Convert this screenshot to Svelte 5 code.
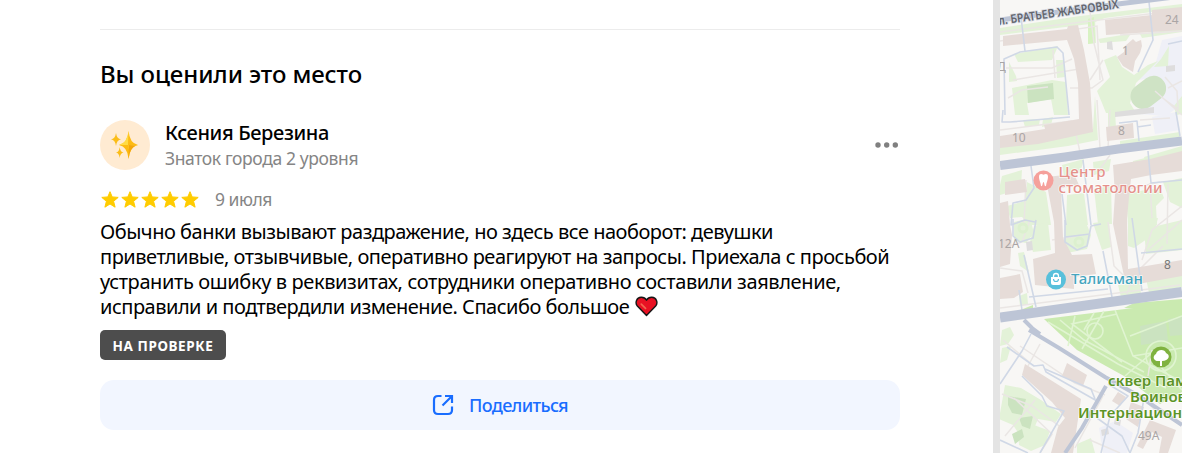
<script lang="ts">
  interface Line {
    text: string
    spacing: number
  }

  const lines: Line[] = [
    { text: 'Обычно банки вызывают раздражение, но здесь все наоборот: девушки', spacing: -0.49 },
    { text: 'приветливые, отзывчивые, оперативно реагируют на запросы. Приехала с просьбой', spacing: -0.47 },
    { text: 'устранить ошибку в реквизитах, сотрудники оперативно составили заявление,', spacing: -0.38 },
    { text: 'исправили и подтвердили изменение. Спасибо большое', spacing: -0.5 },
  ]

  const rating = 5

  const lawns = [
    'M1000 28 1080 16 1098 14 1182 4V8L1105 18 1090 24 1000 35Z',
    'M1014 54 1058 46 1052 60 1018 62Z',
    'M1009 62l7 14 1 5-8 1zM1056 60l8 0 1 17-8 1z',
    'M1012 88l40-8 14 2 2 33h-14l-3-16-24 4 2 12h-14z',
    'M1088 19l7-2 1 26-8 1z',
    'M1104 60l12-5 6 12 12 8 14-10 10-4-22 22-6 20 6 10h-30l-4-10-5-12 13-14z',
    'M1098 39l24-4 8 0-4 6-26 2zM1140 34l42-6v4l-40 6z',
    'M1161 59l8-13-1 20-14 1zM1174 106l8-10v18l-6 1z',
    'M1095 96l3 44-30 6-68 9v-8l45-8 48-10z',
    'M1023 120l17-1-1 6-14 2zM1043 119l10-2-2 8-9 2z',
    'M1108 110l7-1 1 20-8 3zM1120 141l60-9v5l-60 8z',
    'M1002 176l20-6-1 17-14 6-7 2v-10z',
    'M1027 182l19 10 5 33h-22l-7-8-12 1-3-12 18-5z',
    'M1062 165l22-6-4 14-16 3zM1093 162l18-3-2 12-15 4zM1133 161l12-3 2 14-14 2z',
    'M1067 195l17-2 4 32h-22zM1094 189l17-3 1 38h-14zM1126 193l34-5 4 10-8 8 1 19h-29z',
    'M1163 182l19-4v30l-12-6zM1144 157l38-11v6l-36 10z',
    'M1014 222l16-4 4 15-8 10-12-2zM1034 226l14-4 3 28-18 2-3-10z',
    'M1065 224l20-4 6 15-4 14-20 4-3-12zM1093 223l16-2 2 26-9 3z',
    'M1128 222l30-4-4 16-20 14-6-2zM1144 229l38-9v30l-36 4z',
    'M1018 253l6-1 5 20-9-6zM1019 296l8-3 1 11-8 2z',
    'M1118 285l22-2 1 11-20 3zM1146 278l36-8v17l-33 6z',
    'M1002 330l8-3 4 8-6 9-8 2zM1002 348l9-2-4 14-7 3z',
    'M1005 385l16 3 20 12 20 14-5 8-18-3-5 12-12 6-8-12-14-6z',
    'M1018 433l16-8 16 6-5 14-14 6-12-6zM1077 444l14-6 4 15h-18z',
  ]

  const parks = [
    'M1044 319 1182 302V392L1160 404 1124 376 1077 350Z',
    'M1000 318l25-7 8-3v-3zM1124 308l10-5 48-4v12z',
  ]

  const darkLawns = [
    'M1027 86l26-3 1 16-26 4z',
    'M1140 326l26-5 2 20-27 4zM1168 319l14-2v18l-12 1z',
    'M1008 396l18 3-4 16-10-2-4-8zM1019 418l14-2-3 13-8-3zM1012 434l10-5 2 8-9 7z',
  ]

  const houses = [
    'M1003 36 1067 29 1068 26 1078 25 1084 50 1090 83 1093 132 1038 144 1000 148V136L1045 129 1044 125 1079 119 1078 83 1074 59 1067 40 1003 46Z',
    'M1105 20l47-5v-5l30-3v23l-30 2-46 3z',
    'M1117 57l7-5 1-6 8-7 3 3 5-2 1 6-2 7-5 8-2 11-10-6z',
    'M1106 127l27-4 1 15-27 3z',
    'M1005 182l20-3 2 13-22 3z',
    'M1046 177l28-3 5 11-18 3 2 50 9 17 20-1 4 20-22 3 0 12-39-4-2-26 22-6-1-31-7-37z',
    'M1113 165l37-6 32-8v20l-31 4-20 4-2 18-2 22 1 50 54-9v16l-44 8-14-8-11-52 2-30z',
    'M1000 203l8-2 2 24 2 10-2 29-10 3z',
    'M1000 278l20-4 3 18-9 6-14 1z',
    'M1025 364 1081 399 1073 453H1051L1058 427 1065 418 1052 402 1022 375Z',
    'M1067 363 1087 375 1083 386 1062 376Z',
    'M1118 392l8 5-6 9-8-5zM1131 402l13 5-6 20-12-8zM1150 420l26 10-8 23h-9l3-16-10-5-9 17-6-3z',
  ]

  const paths = [
    'M1000 32 1182 10M1000 41 1097 26 1100 80M1090 12 1094 43 1103 80 1092 88 1070 88M1120 35l62-4',
    'M1006 68l46 0 20-9M1013 80l66-11M1053 50l2 28M1008 98l14-8 26-3M1097 100l3 48M1103 60l-13 20',
    'M1000 163 1182 143M1110 110l-2 38M1140 120l30-2M1075 130l5 22M1110 155l-10 14M1000 130l72-9',
    'M1026 180l-2 45M1150 183l2 35M1168 184l-1 60M1124 190l36-8M1182 206l-30 24-10 30',
    'M1000 249l22-7 8-22M1000 268l22 3 6 22M1052 240l30-5M1108 222l6 44 20 20M1148 250l34-30',
    'M1000 308l180-23M1118 282l60-9M1127 294l6-18 30-30',
    'M1003 340l26 22M1002 394l30 12 30 22M1040 344l-12 22M1014 398l38 36-12 19M1035 400l-30 36',
    'M1103 396l-28 52M1143 398l20 20M1090 440l30 13M1020 346l55 37 30 12',
    'M1165 77l12 14 1 18-14-10M1168 88l14-7M1155 91l27 24M1152 350l-4 26',
  ]

  const lanes = [
    'M1021 17l4 34M1005 115l-1-56 16-7 37-5 6 6 6 62M1149 2l4 38-15 32M1182 41l-14 3',
    'M1003 110l-1 12 8 0 60-5M1119 123l18-2 2 20M1176 112l4 24M1137 127l14-2',
    'M1031 166l3 22-8 12-13 3-2 22 14-5 10 2',
    'M1083 160l8 65M1148 151l3 32 31-3M1062 194l4 31',
    'M1013 219l0 17 7 6 13-4 3-18M1065 220v22l12 8 10-4 4-20 10-2M1065 237l25-3',
    'M1103 251l9 46M1024 255l12 52M1132 218l10 73M1141 253l41-4M1029 297l79-8M1019 290l3 20',
    'M1000 384 1022 351 1031 334M1007 347l27 19 9-1 3 7 51 29M1045 369l46 20 4 10',
    'M1022 376l20 20 5 10 17 5-24 42M1000 440l28 13M1108 384l20 12-18 20-9 37M1097 418l25 18 8 17M1144 398l-6 35-8 20',
  ]
</script>

<div class="page">
  <main class="panel">
    <section class="review">
      <h2>Вы оценили это место</h2>

      <header class="author">
        <div class="avatar">
          <svg width="28" height="28" viewBox="0 0 28 28">
            <path fill="#fdbb13" d="M17.6 0Q18.6 12.2 27 14 18.6 15.6 17.6 28 16.5 15.6 8 14 16.5 12.2 17.6 0z" />
            <path fill="#ffdb45" d="M17.6 0Q17 12.2 17 14L8 14Q16 12.2 17.6 0zM17.6 14 27 14Q19 15.2 17.6 18z" />
            <path fill="#f4a60b" d="M17.8 14 25 14.6Q18.6 17 17.6 28z" />
            <path fill="#fbbd18" d="M5 2Q5.8 7.8 10 8.3 5.8 9.1 5 15 4.2 9.1 0 8.3 4.2 7.8 5 2zM8.7 16Q9.2 21 12.5 21.6 9.2 22.2 8.7 27 8.2 22.2 5 21.6 8.2 21 8.7 16z" />
          </svg>
        </div>
        <div class="who">
          <div class="name">Ксения Березина</div>
          <div class="level">Знаток города 2 уровня</div>
        </div>
        <button class="more" aria-label="Ещё">
          <svg width="24" height="6" viewBox="0 0 24 6" fill="#808080">
            <circle cx="4" cy="3" r="2.7" />
            <circle cx="12.700" cy="3" r="2.7" />
            <circle cx="21.300" cy="3" r="2.7" />
          </svg>
        </button>
      </header>

      <div class="rating">
        <div class="stars">
          {#each Array(rating) as _}
            <svg width="20" height="20" viewBox="0 0 20 20">
              <path fill="#fc0" stroke="#fc0" stroke-width="1" stroke-linejoin="round" d="M10 1.700l2.200 5.200 6 .5-4.600 3.900 1.500 5.900-5.100-3.200-5.100 3.200 1.500-5.900-4.600-3.900 6-.5z" />
            </svg>
          {/each}
        </div>
        <span class="date">9 июля</span>
      </div>

      <div class="text">
        {#each lines as line, i}
          <div class="line">
            <span style="letter-spacing: {line.spacing}px">{line.text}</span>
            {#if i === lines.length - 1}
              <svg class="heart" width="23" height="21" viewBox="0 0 24 22">
                <path fill="#e81123" stroke="#161616" stroke-width="1.5" stroke-linejoin="round" d="M12 20.3 2.4 10.5C-.3 7.3 1.5 1.5 6.4 1.4 9 1.3 10.9 2.6 12 4.4 13.1 2.6 15 1.3 17.6 1.4 22.5 1.5 24.3 7.3 21.6 10.5z" />
                <path fill="none" stroke="#f3654f" stroke-width="1.8" stroke-linecap="round" d="M6.5 8.5l4.500 4.500" />
              </svg>
            {/if}
          </div>
        {/each}
      </div>

      <div class="status">НА ПРОВЕРКЕ</div>

      <button class="share">
        <svg width="22" height="22" viewBox="0 0 22 22" fill="none" stroke="#196dff" stroke-width="2.2">
          <path d="M9.5 2H6Q2 2 2 6v10q0 4 4 4h10q4 0 4-4v-3.5" />
          <path d="M13 2h7v7M19.5 2.5 10.5 11.5" />
        </svg>
        <span>Поделиться</span>
      </button>
    </section>
  </main>

  <aside class="map">
    <svg width="182" height="453" viewBox="1000 0 182 453">
      <rect x="1000" width="182" height="453" fill="#f8f7f5" />
      <path fill="#eff0f7" d="M1162 40l20-4v68l-16 12-28-2 22-24-2-12-20 2 18-18zM1152 117l24-5 4 18-25 4zM1099 428l16-7 18 12-6 20h-24z" />
      {#each lawns as d}
        <path {d} fill="#e3f2d8" />
      {/each}
      {#each parks as d}
        <path {d} fill="#caeab0" />
      {/each}
      <path fill="#d8f2c3" d="M1088 19l6-2 1 26-7 1z" />
      {#each darkLawns as d}
        <path {d} fill="#cbe3c0" />
      {/each}
      <rect x="1129" y="80" width="38" height="25" rx="12" fill="#cfe3c5" transform="rotate(-38 1148 92)" />

      <g fill="none" stroke="#eae6e4" stroke-width="1.5">
        {#each paths as d}
          <path {d} />
        {/each}
      </g>
      <g fill="none" stroke="#e0f4d1" stroke-width="1.6">
        <path d="M1048 322l70 42 48 24M1060 320l24 20 60 32M1075 316l-7 30M1104 311l-22 38M1115 310l18 46 49 26M1182 316l-52 20M1117 314l-45 10 50 38M1133 356l49-8M1094 313l-10 17M1160 366l22 24M1155 350l-30 26" />
        <circle cx="1095" cy="331" r="8" />
        <circle cx="1161" cy="356" r="15" />
      </g>
      {#each houses as d}
        <path {d} fill="#e6dcd8" />
      {/each}
      <path fill="#dedddd" d="M1107 42l5-1 1 9-6-1zM1166 66l9-1v6l-9 1zM1115 112l39-5v6l-39 4zM1026 242l6-1 1 9-6 1zM1101 430l7-2 1 6-7 2zM1115 418l6 2-1 6-6-2z" />
      <g fill="none" stroke="#dcf0cf" stroke-width="3">
        <circle cx="1023" cy="228" r="4" />
        <circle cx="1079" cy="242" r="4" />
      </g>

      <g fill="none" stroke="#d0d8e6" stroke-width="1.6" stroke-linejoin="round">
        {#each lanes as d}
          <path {d} />
        {/each}
      </g>
      <g fill="none" stroke="#bdc5d6">
        <path stroke-width="5" d="M1000 20 1118 4 1182-4" />
        <path stroke-width="9" d="M1000 165.500 1065 157 1118 149 1182 141" />
        <path stroke-width="10" d="M1000 317.500 1182 292" />
        <path stroke-width="4" d="M1024 320l8 8 8 6M1029 330l30 18 46 29 34 19 43 29M1106 386l-24 42-17 25" />
      </g>

      <g class="num">
        <text x="1165" y="24">24</text>
        <text x="1122" y="55">1</text>
        <text x="1012" y="142">10</text>
        <text x="1118" y="135">8</text>
        <text x="998" y="248">12А</text>
        <text class="dark" x="1164" y="269">8</text>
        <text x="1138" y="440">49А</text>
        <text x="997" y="71">Д</text>
      </g>
      <text class="street" transform="translate(999 25) rotate(-8)" textLength="121" lengthAdjust="spacingAndGlyphs">л. БРАТЬЕВ ЖАБРОВЫХ</text>

      <circle cx="1043.5" cy="180.5" r="10" fill="#f5a09b" />
      <path fill="#fff" d="M1039 177c0-4 3-3 4.500-2.200 1.500-.8 4.500-1.800 4.500 2.200 0 3-1.500 5-2 9-2 1-1.500-4-2.500-4s-.5 5-2.500 4c-.5-4-2-6-2-9z" />
      <g class="poi red">
        <text x="1058.5" y="177" textLength="47">Центр</text>
        <text x="1058.5" y="192.5" textLength="104">стоматологии</text>
      </g>

      <circle cx="1056" cy="279.5" r="10" fill="#58c0db" />
      <path fill="#fff" d="M1051 277h10v6q0 2-2 2h-6q-2 0-2-2z" />
      <path fill="none" stroke="#fff" stroke-width="1.3" d="M1053.5 277v-1a2.500 2.500 0 0 1 5 0v1" />
      <path fill="none" stroke="#58c0db" stroke-width="1.2" d="M1053.5 279a2.500 2.500 0 0 0 5 0" />
      <text class="poi blue" x="1071" y="284" textLength="72">Талисман</text>

      <circle cx="1161" cy="357" r="10.5" fill="#7fb23f" />
      <path fill="#fff" d="M1160 366v-5c-7 1-8-5-4-7 1-5 9-5 10-1 5 2 3 8-4 8v5z" />
      <g class="poi green">
        <text x="1108" y="386">сквер Пам</text>
        <text x="1130" y="402">Воинов</text>
        <text x="1078" y="418" textLength="104">Интернацион</text>
      </g>
    </svg>
  </aside>
</div>

<style>
  :global(body) {
    margin: 0;
    background: #fff;
  }

  .page {
    display: flex;
    width: 1182px;
    height: 453px;
    overflow: hidden;
    font-family: 'Noto Sans', 'Open Sans', sans-serif;
    color: #000;
  }

  .panel {
    flex: none;
    box-sizing: border-box;
    width: 993px;
    padding: 29px 93px 0 100px;
  }

  .review {
    border-top: 1px solid #ececec;
  }

  h2 {
    margin: 29px 0 0;
    font-size: 24px;
    font-weight: 500;
    line-height: 30px;
    letter-spacing: -0.08px;
    white-space: nowrap;
  }

  .author {
    display: flex;
    align-items: center;
    height: 50px;
    margin-top: 31px;
  }

  .avatar {
    display: flex;
    align-items: center;
    justify-content: center;
    width: 50px;
    height: 50px;
    border-radius: 50%;
    background: #ffebd2;
  }

  .who {
    flex: 1;
    margin-left: 15px;
    white-space: nowrap;
  }

  .name {
    font-size: 20px;
    font-weight: 500;
    line-height: 26px;
    letter-spacing: -0.37px;
  }

  .level {
    color: #858585;
    font-size: 17.5px;
    line-height: 25px;
    letter-spacing: -0.38px;
  }

  .more {
    display: flex;
    padding: 0 2px 0 0;
    border: 0;
    background: none;
  }

  .rating {
    display: flex;
    align-items: center;
    height: 20px;
    margin-top: 20px;
  }

  .stars {
    display: flex;
  }

  .date {
    margin-left: 15px;
    padding-bottom: 2px;
    color: #858585;
    font-size: 17.5px;
    letter-spacing: -0.5px;
  }

  .text {
    margin-top: 9px;
    font-size: 20px;
    line-height: 25px;
    white-space: nowrap;
  }

  .line {
    display: flex;
    align-items: center;
    height: 25px;
  }

  .heart {
    margin-left: 6px;
  }

  .status {
    display: flex;
    align-items: center;
    justify-content: center;
    box-sizing: border-box;
    width: 126px;
    height: 30px;
    margin-top: 11px;
    padding-top: 2px;
    border-radius: 5px;
    background: #4d4d4d;
    color: #fff;
    font-size: 13.5px;
    font-weight: 700;
    letter-spacing: 0.6px;
    white-space: nowrap;
  }

  .share {
    display: flex;
    align-items: center;
    justify-content: center;
    gap: 15px;
    width: 800px;
    height: 50px;
    margin-top: 20px;
    padding: 0 0 1px;
    border: 0;
    border-radius: 14px;
    background: #f2f6ff;
    color: #196dff;
    font-family: inherit;
    font-size: 18px;
    font-weight: 500;
    letter-spacing: -0.65px;
  }

  .map {
    flex: none;
    width: 182px;
    height: 453px;
    border-left: 7px solid #e4e4e4;
  }

  .map svg {
    display: block;
  }

  .num {
    fill: #aaa5a5;
    font-size: 12px;
  }

  .num .dark {
    fill: #777;
  }

  .street {
    fill: #62656d;
    font-size: 12px;
    font-weight: 600;
    stroke: #d5dae4;
    stroke-width: 1.5px;
    paint-order: stroke;
  }

  .poi {
    font-size: 15px;
    font-weight: 500;
    stroke: #fff;
    stroke-width: 1.5px;
    stroke-opacity: 0.8;
    paint-order: stroke;
  }

  .red {
    fill: #e5918b;
  }

  .blue {
    fill: #45a5bf;
  }

  .green {
    fill: #5c9427;
    font-weight: 600;
  }
</style>
